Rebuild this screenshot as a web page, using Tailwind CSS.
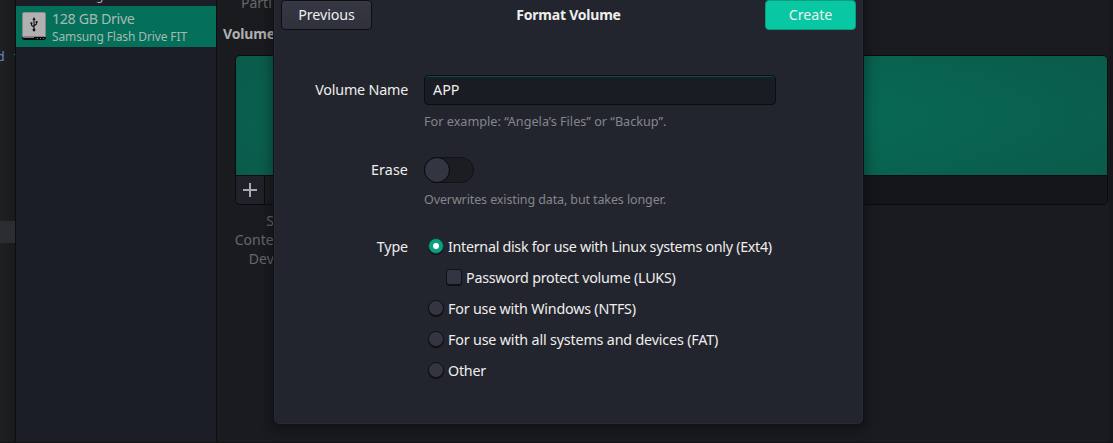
<!DOCTYPE html>
<html lang="en">
<head>
<meta charset="utf-8">
<title>Format Volume</title>
<script src="https://cdn.jsdelivr.net/npm/@tailwindcss/browser@4"></script>
</head>
<body class="h-[443px] w-[1113px] overflow-hidden bg-[#1a1b1f] font-['Noto_Sans',sans-serif] text-[14px] leading-[20px] text-[#eeeeec]">
<div class="relative flex h-full w-full overflow-hidden">
  <!-- Terminal behind the window -->
  <div class="flex h-full w-[15px] shrink-0 flex-col bg-linear-to-r from-[#1f2023] to-[#191a1c] pt-[47px]">
    <div class="h-[20px] overflow-hidden font-['DejaVu_Sans_Mono',monospace] text-[13px] text-[#6386b5] whitespace-pre"><span class="-ml-[3px]">d</span><span class="ml-[8px] text-[#59819a]">f</span></div>
    <div class="mt-[154px] h-[22px] bg-[#2c2d31]"></div>
  </div>
  <!-- Drive list -->
  <aside class="flex h-full w-[202px] shrink-0 flex-col border-x border-[#0d0e11] bg-[#1b1e26]">
    <div class="flex h-[6px] items-end overflow-hidden pl-[80px] text-[12px] leading-[20px] text-[#a4a6a8]"><span>g</span></div>
    <div class="flex h-[41px] items-start bg-[#05705a] pl-[6px] text-[#a5b9b3]">
      <svg class="mt-[6px] h-[28px] w-[24px] shrink-0" viewBox="0 0 24 28">
        <path d="M2 0H22Q24 0 24 2V26Q24 28 22 28H2Q0 28 0 26V2Q0 0 2 0Z" fill="#858585"/>
        <path d="M2 .7H22Q23 .7 23 2V24H1V2Q1 .7 2 .7Z" fill="#b1b1b1"/>
        <path d="M0 25H24V26Q24 28 22 28H2Q0 28 0 26Z" fill="#080808"/>
        <path d="M1 25H12V26H1ZM15 26H16V27H15ZM18 26H19V27H18ZM21 26H22V27H21Z" fill="#777"/>
        <path d="M12 7V18M12 15L9.5 13.2V11.5M12 14L14.5 12V10" fill="none" stroke="#111" stroke-width="1.1"/>
        <path d="M12 5L13.6 8H10.4ZM8.5 10.2H10.3V12H8.5ZM13.7 9H15.5V11H13.7Z" fill="#111"/>
        <circle cx="12" cy="18" r="1.4" fill="#111"/>
      </svg>
      <div class="flex flex-col pl-[6px] whitespace-nowrap">
        <span class="mt-[3px] h-[19px] text-[14.3px] leading-[19px] tracking-[-0.38px]">128 GB Drive</span>
        <span class="text-[12px] leading-[18px] tracking-[-0.12px]">Samsung Flash Drive FIT</span>
      </div>
    </div>
  </aside>
  <!-- Volume details -->
  <main class="flex h-full min-w-0 flex-1 flex-col">
    <div class="h-[24px] pl-[24px] leading-[6px] text-[#66676a]">Parti</div>
    <h2 class="h-[31px] pl-[6px] leading-[20px] font-bold text-[#b0b1b1] tracking-[-0.15px]">Volumes</h2>
    <div class="ml-[18px] flex h-[150px] w-[873px] flex-col overflow-hidden rounded-[5px] border border-[#0a0b0d] bg-[#14161a]">
      <div class="h-[119px] bg-radial-[ellipse_60%_90%_at_50%_50%] from-[#056f59] to-[#0b5b4b]"></div>
      <div class="flex flex-1 border-t border-[#0a0b0d]">
        <div class="flex w-[29px] items-center justify-center border-r border-[#0a0b0d] bg-[#20222a]">
          <svg class="h-[14px] w-[14px]" viewBox="0 0 14 14"><path d="M7 0V14M0 7H14" stroke="#a9aaab" stroke-width="2"/></svg>
        </div>
        <div class="w-[29px] border-r border-[#0a0b0d] bg-[#1b1d22]"></div>
      </div>
    </div>
    <dl class="flex w-[75px] flex-col pt-[6px] text-right leading-[19px] text-[#66676a]">
      <dt>Size</dt><dt class="-mr-[2px]">Contents</dt><dt>Device</dt>
    </dl>
  </main>
  <div class="absolute top-0 right-0 h-full w-[4px] bg-[#15171b]"></div>
  <div class="absolute bottom-0 left-0 h-px w-full bg-[#131418]"></div>

  <!-- Format dialog -->
  <section class="absolute top-[-10px] left-[274px] flex h-[434px] w-[589px] flex-col rounded-[5px] border-x border-b border-[#292b33] bg-[#23252e] pt-[10px] shadow-[0_0_0_1px_#101115,0_3px_12px_4px_rgba(0,0,0,0.3)]">
    <header class="flex h-[30px] items-start justify-between px-[6px]">
      <button class="h-[30px] w-[91px] rounded-[4px] border border-[#0d0e12] bg-linear-to-b from-[#353843] to-[#2f323d] text-[14.3px] leading-[28px] tracking-[-0.1px] shadow-[inset_0_1px_#3b3e48]">Previous</button>
      <h1 class="pt-[5px] text-[14px] font-bold tracking-[-0.22px]">Format Volume</h1>
      <button class="h-[30px] w-[91px] rounded-[4px] border border-[#079d7d] bg-[#08c7a3] text-[14.3px] leading-[28px] tracking-[-0.05px]">Create</button>
    </header>
    <div class="flex pt-[45px] text-[14.3px]">
      <label class="w-[133px] shrink-0 pt-[5px] text-right tracking-[-0.2px]">Volume Name</label>
      <div class="ml-[16px] flex flex-col">
        <div class="h-[30px] w-[352px] rounded-[4px] border border-[#0b0d10] bg-[#1a1c23] pl-[8px] leading-[28px] shadow-[inset_0_1px_#0b4d42]">APP</div>
        <p class="h-[27px] pt-[6px] text-[12.67px] leading-[20px] text-[#83858a]">For example: “Angela’s Files” or “Backup”.</p>
      </div>
    </div>
    <div class="flex pt-[25px] text-[14.3px]">
      <label class="w-[133px] shrink-0 pt-[3px] text-right tracking-[0.1px]">Erase</label>
      <div class="ml-[16px] flex flex-col">
        <div class="h-[26px] w-[50px] rounded-full border border-[#101216] bg-[#1b1d23]"><div class="-mt-px -ml-px h-[26px] w-[26px] rounded-full border border-[#08090b] bg-[#333642]"></div></div>
        <p class="pt-[7px] text-[12.5px] leading-[20px] tracking-[-0.11px] text-[#83858a]">Overwrites existing data, but takes longer.</p>
      </div>
    </div>
    <div class="flex pt-[27px] text-[14.3px]">
      <label class="w-[133px] shrink-0 text-right tracking-[-0.15px]">Type</label>
      <div class="ml-[20px] flex flex-col gap-[11px] whitespace-nowrap">
        <div class="flex h-[20px] items-center gap-[4px]"><span class="-mt-[2px] flex h-[16px] w-[16px] items-center justify-center rounded-full border border-[#0b3d35] bg-[#0c9f80] shadow-[0_1px_#0e0f13]"><i class="h-[6px] w-[6px] rounded-full bg-white"></i></span><span class="tracking-[-0.29px]">Internal disk for use with Linux systems only (Ext4)</span></div>
        <div class="flex h-[20px] items-center gap-[4px] pl-[18px]"><span class="-mt-[2px] h-[16px] w-[16px] rounded-[3px] border border-[#101115] bg-[#333642] shadow-[0_1px_#0e0f13]"></span><span class="tracking-[-0.25px]">Password protect volume (LUKS)</span></div>
        <div class="flex h-[20px] items-center gap-[4px]"><span class="-mt-[2px] h-[16px] w-[16px] rounded-full border border-[#101115] bg-[#333642] shadow-[0_1px_#0e0f13]"></span><span class="tracking-[-0.2px]">For use with Windows (NTFS)</span></div>
        <div class="flex h-[20px] items-center gap-[4px]"><span class="-mt-[2px] h-[16px] w-[16px] rounded-full border border-[#101115] bg-[#333642] shadow-[0_1px_#0e0f13]"></span><span class="tracking-[-0.17px]">For use with all systems and devices (FAT)</span></div>
        <div class="flex h-[20px] items-center gap-[4px]"><span class="-mt-[2px] h-[16px] w-[16px] rounded-full border border-[#101115] bg-[#333642] shadow-[0_1px_#0e0f13]"></span><span class="tracking-[-0.25px]">Other</span></div>
      </div>
    </div>
  </section>
</div>
</body>
</html>
